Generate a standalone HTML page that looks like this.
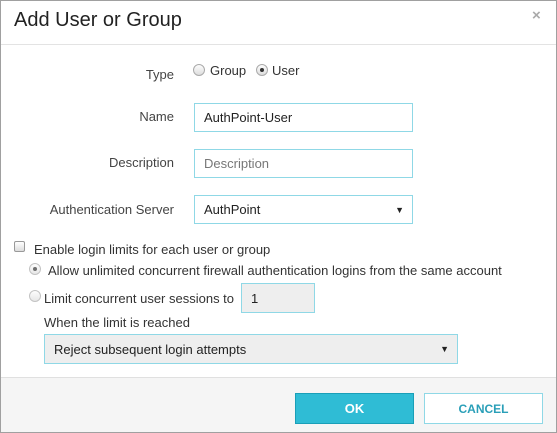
<!DOCTYPE html>
<html><head><style>
*{box-sizing:border-box;margin:0;padding:0}
body{width:557px;height:433px;background:#fff;font-family:"Liberation Sans",sans-serif;position:relative;overflow:hidden;color:#333}
.frame{position:absolute;left:0;top:0;width:557px;height:433px;border:1px solid #a0a0a0}
.a{position:absolute;white-space:nowrap}
.lbl{font-size:13px;color:#444;text-align:right;width:174px;left:0}
.inp{position:absolute;border:1px solid #8fd8e6;background:#fff;font-size:13px;padding-left:9px;display:flex;align-items:center;color:#222}
.radio{position:absolute;width:12px;height:12px;border-radius:50%;border:1px solid #aaa;background:linear-gradient(#fdfdfd,#ddd)}
.dot::after{content:"";position:absolute;left:3px;top:3px;width:4px;height:4px;border-radius:50%;background:#333}
.arrow{position:absolute;right:8px;font-size:9px;color:#222}
</style></head><body>
<div class="a" style="left:14px;top:9px;font-size:20px;color:#222">Add User or Group</div>
<div class="a" style="left:532px;top:7px;font-size:15px;color:#aaa;font-weight:bold">×</div>
<div style="position:absolute;left:0;top:44px;width:557px;height:1px;background:#e3e3e3"></div>

<div class="a lbl" style="top:67px">Type</div>
<div class="radio" style="left:193px;top:64px"></div>
<div class="a" style="left:210px;top:63px;font-size:13px">Group</div>
<div class="radio dot" style="left:256px;top:64px"></div>
<div class="a" style="left:272px;top:63px;font-size:13px">User</div>

<div class="a lbl" style="top:109px">Name</div>
<div class="inp" style="left:194px;top:103px;width:219px;height:29px">AuthPoint-User</div>
<div class="a lbl" style="top:155px">Description</div>
<div class="inp" style="left:194px;top:149px;width:219px;height:29px;color:#777">Description</div>
<div class="a lbl" style="top:202px">Authentication Server</div>
<div class="inp" style="left:194px;top:195px;width:219px;height:29px">AuthPoint<span class="arrow">▼</span></div>

<div style="position:absolute;left:14px;top:241px;width:11px;height:11px;border:1px solid #999;background:linear-gradient(#fff,#ddd);border-radius:2px"></div>
<div class="a" style="left:34px;top:242px;font-size:13px">Enable login limits for each user or group</div>
<div class="radio dot" style="left:29px;top:263px;opacity:.7"></div>
<div class="a" style="left:48px;top:263px;font-size:13px">Allow unlimited concurrent firewall authentication logins from the same account</div>
<div class="radio" style="left:29px;top:290px;opacity:.7"></div>
<div class="a" style="left:44px;top:291px;font-size:13px">Limit concurrent user sessions to</div>
<div class="inp" style="left:241px;top:283px;width:74px;height:30px;background:#eee">1</div>
<div class="a" style="left:44px;top:315px;font-size:13px">When the limit is reached</div>
<div class="inp" style="left:44px;top:334px;width:414px;height:30px;background:#eee">Reject subsequent login attempts<span class="arrow">▼</span></div>

<div style="position:absolute;left:0;top:377px;width:557px;height:56px;background:#f5f5f5;border-top:1px solid #e0e0e0"></div>
<div class="a" style="left:295px;top:393px;width:119px;height:31px;background:#2fbcd5;border:1px solid #1a9fb8;color:#fff;font-weight:bold;font-size:13px;display:flex;align-items:center;justify-content:center">OK</div>
<div class="a" style="left:424px;top:393px;width:119px;height:31px;background:#fff;border:1px solid #8fd8e6;color:#2a9fb8;font-weight:bold;font-size:12px;display:flex;align-items:center;justify-content:center">CANCEL</div>
<div class="frame"></div>
</body></html>
